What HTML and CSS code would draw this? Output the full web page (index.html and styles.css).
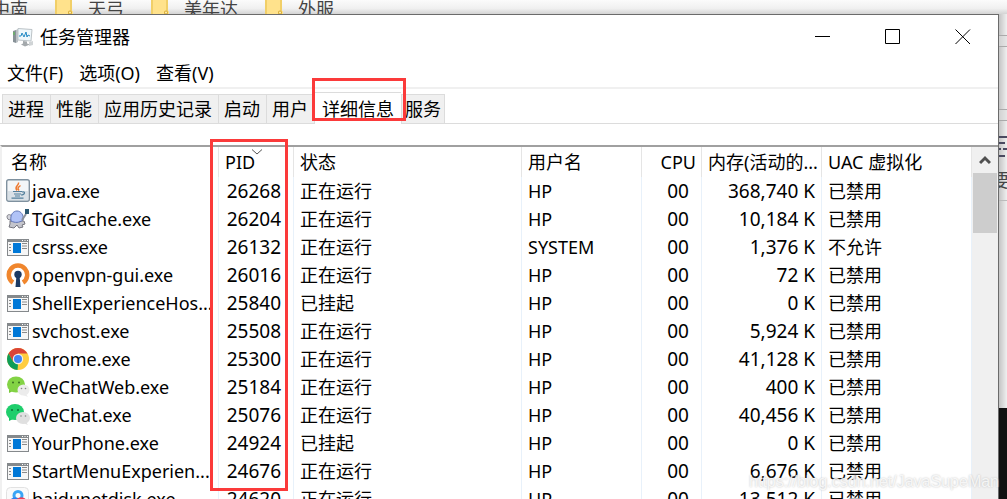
FILE: index.html
```html
<!DOCTYPE html>
<html lang="zh-CN">
<head>
<meta charset="utf-8">
<title>任务管理器</title>
<link rel="stylesheet" href="styles.css">
</head>
<body>
<svg class="defs" aria-hidden="true">
  <symbol id="app" viewBox="0 0 24 24">
    <path d="M1 4h22v17H1z" fill="#85898c"/><path d="M2 7h20v13H2z" fill="#f6f6f6"/>
    <path d="M16 5.500h1M18.500 5.500h1M21 5.500h1" stroke="#fff"/>
    <path d="M7 8h8v10H7z" fill="#0078d7"/>
    <path d="M3 9.500h2M3 12.500h2M3 15.500h2M16 8.500h5M16 11h5M16 13.500h5" stroke="#8a8a8a"/>
  </symbol>
  <symbol id="folder" viewBox="0 0 18 14"><path d="M0 0h16v11h2v3H0z" fill="#ffe28c"/><path d="M0 0h2v14H0zM15 0h2v11h-2z" fill="#f1cf68"/><circle cx="15" cy="12.500" r="2" fill="#d9ac35"/><circle cx="15" cy="12.500" r="1" fill="#fff1b5"/></symbol>
</svg>
<div class="desktop">
  <div class="behind-top">
    <span>中南</span><svg><use href="#folder"/></svg><span>天弓</span><svg><use href="#folder"/></svg><span>美年达</span><svg><use href="#folder"/></svg><span>外服</span>
  </div>
  <div class="middle">
  <main class="window">
    <header class="titlebar">
      <svg class="logo" viewBox="0 0 22 20"><path d="M1 4l3-1v13l-3-1z" fill="#879197"/><path d="M2 5v3" stroke="#57c24a"/><path d="M4 3l2-1v13l-2 1z" fill="#b9bfc3"/><path d="M6 1.500l14 1-1 11.500-13-1z" fill="#eff7fb" stroke="#bcc3c7"/><path d="M7 9h2l1-3 2 4 2-5 1 5 1-2 2 1" fill="none" stroke="#238ac5"/><path d="M11 14l4 .5v2l3 1-5 2-4-2 2-1z" fill="#a4a9ac"/><path d="M17 15l4-1v4l-4 1z" fill="#d0d4d6"/></svg>
      <h1>任务管理器</h1>
      <button aria-label="最小化"><svg viewBox="0 0 16 16"><path d="M0 7.500h15" stroke="#000"/></svg></button>
      <button aria-label="最大化"><svg viewBox="0 0 16 16"><path d="M.5.5h14v14H.5z" fill="none" stroke="#000"/></svg></button>
      <button aria-label="关闭"><svg viewBox="0 0 16 16"><path d="M.5.5l14.500 14.500M15 .5L.5 15" stroke="#000"/></svg></button>
    </header>
    <nav class="menu"><button>文件(F)</button><button>选项(O)</button><button>查看(V)</button></nav>
    <div class="tabs" role="tablist">
      <button role="tab">进程</button><button role="tab">性能</button><button role="tab">应用历史记录</button><button role="tab">启动</button><button role="tab">用户</button><button role="tab" class="active" aria-selected="true">详细信息</button><button role="tab">服务</button>
    </div>
    <section class="details">
      <table>
        <colgroup><col class="c-name"><col class="c-pid"><col class="c-state"><col class="c-user"><col class="c-cpu"><col class="c-mem"><col></colgroup>
        <thead><tr><th class="first">名称</th><th>PID<svg class="sort" viewBox="0 0 12 6"><path d="M1 .5l5 4.500 5-4.500" fill="none" stroke="#555"/></svg></th><th>状态</th><th>用户名</th><th class="cpu">CPU</th><th class="mem">内存(活动的...</th><th>UAC 虚拟化</th></tr></thead>
        <tbody>
        <tr><td><div class="proc"><svg viewBox="0 0 24 24"><rect x=".7" y=".7" width="22.600" height="21.600" rx="2" fill="#f3f6f8" stroke="#7f919f" stroke-width="1.400"/><path d="M2 12h20v9H2z" fill="#d9e1e7"/><path d="M12.500 3.500c1 3-5 4-1.500 8M14.500 6.500c-3 2-3 3-1.500 5" fill="none" stroke="#ee7a30" stroke-width="1.500"/><path d="M7 12.500h9M8 15h7M9 17h5M5.500 19.200h12M16 13c4-1 3 3-1 3" fill="none" stroke="#53809d" stroke-width="1.200"/></svg>java.exe</div></td><td class="num">26268</td><td>正在运行</td><td>HP</td><td class="num">00</td><td class="num">368,740 K</td><td>已禁用</td></tr>
        <tr><td><div class="proc"><svg viewBox="0 0 24 24"><path d="M1 9c1-2 4-2 5 1l-1 3c-3 0-4-1-4-4z" fill="#d4d5dc" stroke="#85858d"/><path d="M4 14l14 0 1 3-3 1 1 2-4 1-2-3-3 3-5-1 1-3z" fill="#c4c5cc" stroke="#77777f"/><path d="M5 14c-1-6 2-10 6-10s7 4 6 9c-4 3-8 3-12 1z" fill="#b1c3f7" stroke="#6277b8"/><path d="M16 13l4-6" stroke="#8d929a" stroke-width="2"/><path d="M19 2h4v5h-4z" fill="#29566f"/></svg>TGitCache.exe</div></td><td class="num">26204</td><td>正在运行</td><td>HP</td><td class="num">00</td><td class="num">10,184 K</td><td>已禁用</td></tr>
        <tr><td><div class="proc"><svg><use href="#app"/></svg>csrss.exe</div></td><td class="num">26132</td><td>正在运行</td><td>SYSTEM</td><td class="num">00</td><td class="num">1,376 K</td><td>不允许</td></tr>
        <tr><td><div class="proc"><svg viewBox="0 0 24 24"><path d="M7 19.500a9.200 9.200 0 1 1 10 0" fill="none" stroke="#f0862d" stroke-width="4.500"/><circle cx="12" cy="11.500" r="3.700" fill="#1b3a64"/><path d="M10.500 12h3l1 12h-5z" fill="#1b3a64"/></svg>openvpn-gui.exe</div></td><td class="num">26016</td><td>正在运行</td><td>HP</td><td class="num">00</td><td class="num">72 K</td><td>已禁用</td></tr>
        <tr><td><div class="proc"><svg><use href="#app"/></svg>ShellExperienceHos...</div></td><td class="num">25840</td><td>已挂起</td><td>HP</td><td class="num">00</td><td class="num">0 K</td><td>已禁用</td></tr>
        <tr><td><div class="proc"><svg><use href="#app"/></svg>svchost.exe</div></td><td class="num">25508</td><td>正在运行</td><td>HP</td><td class="num">00</td><td class="num">5,924 K</td><td>已禁用</td></tr>
        <tr><td><div class="proc"><svg viewBox="0 0 24 24"><circle cx="12" cy="12" r="11" fill="#ffcd40"/><path d="M2.500 6.500A11 11 0 0 1 21.500 6.500H12L7.200 14.700z" fill="#db4437"/><path d="M2.500 6.500L7.200 14.700 12 17.500 11.500 23A11 11 0 0 1 2.500 6.500z" fill="#0f9d58"/><circle cx="12" cy="12" r="5.200" fill="#f1f1f1"/><circle cx="12" cy="12" r="4" fill="#4285f4"/></svg>chrome.exe</div></td><td class="num">25300</td><td>正在运行</td><td>HP</td><td class="num">00</td><td class="num">41,128 K</td><td>已禁用</td></tr>
        <tr><td><div class="proc"><svg viewBox="0 0 24 24"><path d="M3 14v4l4-2z" fill="#78c83c"/><ellipse cx="10" cy="9.500" rx="9" ry="8" fill="#83d345"/><ellipse cx="17.500" cy="15" rx="6" ry="5.500" fill="#ececec"/><path d="M20 19l2 3-5-2z" fill="#ececec"/><g fill="#3a6e22"><circle cx="7" cy="7.500" r="1"/><circle cx="13" cy="7.500" r="1"/></g><g fill="#888"><circle cx="15.500" cy="13.500" r=".8"/><circle cx="19.500" cy="13.500" r=".8"/></g></svg>WeChatWeb.exe</div></td><td class="num">25184</td><td>正在运行</td><td>HP</td><td class="num">00</td><td class="num">400 K</td><td>已禁用</td></tr>
        <tr><td><div class="proc"><svg viewBox="0 0 24 24"><path d="M3 14v4l4-2z" fill="#18c464"/><ellipse cx="9" cy="9" rx="9" ry="8" fill="#1fce6c"/><ellipse cx="17" cy="15" rx="7" ry="6" fill="#e0e0e0"/><path d="M20 19l2 3-5-2z" fill="#e0e0e0"/><g fill="#0b7137"><circle cx="6" cy="7" r="1"/><circle cx="12" cy="7" r="1"/></g><g fill="#888"><circle cx="15" cy="13" r=".8"/><circle cx="19.500" cy="13" r=".8"/></g></svg>WeChat.exe</div></td><td class="num">25076</td><td>正在运行</td><td>HP</td><td class="num">00</td><td class="num">40,456 K</td><td>已禁用</td></tr>
        <tr><td><div class="proc"><svg><use href="#app"/></svg>YourPhone.exe</div></td><td class="num">24924</td><td>已挂起</td><td>HP</td><td class="num">00</td><td class="num">0 K</td><td>已禁用</td></tr>
        <tr><td><div class="proc"><svg><use href="#app"/></svg>StartMenuExperien...</div></td><td class="num">24676</td><td>正在运行</td><td>HP</td><td class="num">00</td><td class="num">6,676 K</td><td>已禁用</td></tr>
        <tr><td><div class="proc"><svg viewBox="0 0 24 24"><rect x=".5" y=".5" width="22" height="22" rx="4" fill="#fafafa" stroke="#e2e2e2"/><circle cx="12" cy="8.500" r="4" fill="none" stroke="#3aa5f5" stroke-width="3"/><path d="M4 17a5 5 0 0 1 8-4" fill="none" stroke="#2d7df0" stroke-width="3"/><path d="M12 13c4-3 8 0 8 4" fill="none" stroke="#ef4056" stroke-width="3"/></svg>baidunetdisk.exe</div></td><td class="num">24620</td><td>正在运行</td><td>HP</td><td class="num">00</td><td class="num">13,512 K</td><td>已禁用</td></tr>
        </tbody>
      </table>
      <div class="scrollbar"><button aria-label="向上滚动"><svg viewBox="0 0 12 10"><path d="M1 8l5-5 5 5" fill="none" stroke="#505050" stroke-width="3"/></svg></button><div class="thumb"></div></div>
    </section>
  </main>
  <aside class="behind-right"><div class="bar b1"></div><div class="bar b2"></div><div class="peek"><svg viewBox="0 0 9 22"><path d="M0 1h9M0 7h6M4 13h5M0 13h2M0 20h6" stroke="#4a4a60" stroke-width="2"/></svg><span>要</span></div><div class="dark"></div></aside>
  </div>
  <div class="mark mark-tab"></div>
  <div class="mark mark-pid"></div>
  <div class="watermark">https://blog.csdn.net/JavaSupeMan</div>
</div>
</body>
</html>
```
FILE: styles.css
```css
* { box-sizing: border-box; }
body { margin: 0; overflow: hidden; font-family: "Noto Sans", "Noto Sans CJK SC", sans-serif; font-size: 18px; color: #000; }
button { margin: 0; padding: 0; border: 0; background: none; font: inherit; color: inherit; }
.defs { position: absolute; width: 0; height: 0; }
.desktop { position: relative; height: 100vh; overflow: hidden; display: flex; flex-direction: column; background: #f4f4f4; }
.behind-top { flex: none; height: 14px; display: flex; overflow: hidden; line-height: 18px; color: #444; background: linear-gradient(#fbfbfb, #f0f0f0 60%, #d4d4d4); }
.behind-top span { white-space: nowrap; }
.behind-top span:first-child { margin-left: -8px; }
.behind-top svg { width: 18px; height: 14px; margin: 0 15px 0 27px; }
.middle { flex: 1; min-height: 0; display: flex; }
.window { flex: 1; min-width: 0; display: flex; flex-direction: column; overflow: hidden; background: #fff; border-top: 1px solid #6b6b6b; border-right: 1px solid #6b6b6b; }
.titlebar { flex: none; display: flex; align-items: center; height: 44px; padding-left: 12px; }
.logo { width: 22px; height: 20px; }
h1 { flex: 1; margin: 0 0 0 6px; font-size: 18px; font-weight: 400; line-height: 24px; }
.titlebar button { width: 70px; height: 44px; display: grid; place-items: center; }
.titlebar button svg { width: 16px; height: 16px; }
.menu { flex: none; display: flex; gap: 16px; height: 30px; padding-left: 7px; border-bottom: 2px solid #f0f0f0; line-height: 28px; }
.tabs { flex: none; display: flex; align-items: flex-end; height: 35px; padding-left: 2px; border-bottom: 1px solid #dcdcdc; }
.tabs button { height: 29px; padding: 0 6px 0 5px; background: #f0f0f0; border: 1px solid #dcdcdc; border-bottom: 0; border-right: 0; line-height: 28px; }
.tabs button:last-child { border-right: 1px solid #dcdcdc; padding: 0 3px; }
.tabs .active { height: 32px; margin-bottom: -1px; padding: 0 7px; background: #fff; }
.details { flex: 1; min-height: 0; display: flex; align-items: stretch; margin-top: 21px; border-left: 2px solid #f0f0f0; border-top: 2px solid #a0a0a0; overflow: hidden; }
table { flex: 1; width: 100%; min-width: 0; table-layout: fixed; border-collapse: separate; border-spacing: 0; align-self: flex-start; }
.c-name { width: 217px; } .c-pid { width: 75px; } .c-state { width: 228px; } .c-user { width: 120px; } .c-cpu { width: 60px; } .c-mem { width: 120px; }
th, td { height: 28px; padding: 0 6px; text-align: left; font-weight: 400; white-space: nowrap; line-height: 28px; border-right: 1px solid #e8f1fa; overflow: hidden; }
th { height: 30px; line-height: 30px; border-color: #e5e5e5; position: relative; }
th.first { padding-left: 9px; }
th.cpu { padding-right: 5px; text-align: right; }
th.mem { padding-right: 0; }
td.num { text-align: right; padding-right: 12px; font-size: 19px; }
td:nth-child(6).num { padding-right: 6px; }
.proc { display: flex; align-items: center; gap: 2px; margin-left: -2px; }
.proc svg { flex: none; width: 24px; height: 24px; }
.sort { position: absolute; left: 32px; top: 2px; width: 12px; height: 6px; }
.scrollbar { flex: none; width: 26px; background: #f0f0f0; padding: 0 1px; }
.scrollbar button { display: grid; place-items: center; width: 24px; height: 26px; }
.scrollbar svg { width: 12px; height: 10px; }
.thumb { height: 60px; background: #cdcdcd; }
.behind-right { flex: none; width: 8px; display: flex; flex-direction: column; background: linear-gradient(90deg, #c4c4c4, #f0f0f0); overflow: hidden; }
.bar { height: 12px; border-top: 1px solid #aaa; border-bottom: 1px solid #aaa; background: #ddd8; }
.b1 { margin-top: 21px; } .b2 { margin-top: 62px; }
.peek { height: 80px; padding-top: 15px; border-bottom: 1px solid #bbb; color: #444; }
.peek svg { display: block; width: 9px; height: 22px; }
.peek span { display: block; margin: 9px 0 0 -8px; line-height: 26px; }
.dark { margin-top: auto; height: 91px; background: #111; }
.mark { position: absolute; border: 3px solid #fb3a3a; }
.mark-tab { left: 312px; top: 78px; width: 94px; height: 43px; }
.mark-pid { left: 210px; top: 139px; width: 78px; height: 352px; }
.watermark { position: absolute; right: 8px; bottom: 7px; font: 16px/20px "Liberation Sans", sans-serif; color: #fffc; text-shadow: 0 0 2px #bbb; }
```
